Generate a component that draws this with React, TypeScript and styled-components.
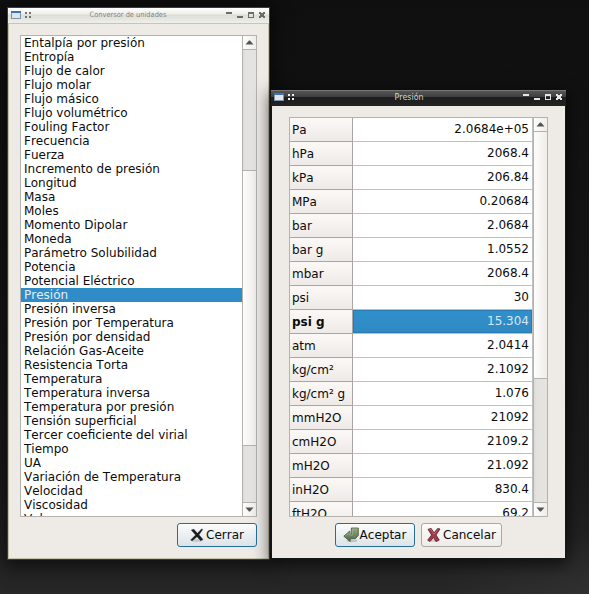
import React from 'react';
import styled, { createGlobalStyle, css } from 'styled-components';

const GlobalStyle = createGlobalStyle`
  * { box-sizing: border-box; }
  body { margin: 0; background: #141414; overflow: hidden; }
`;

const Desktop = styled.main`
  position: relative;
  width: 589px;
  height: 594px;
  overflow: hidden;
  background:
    radial-gradient(ellipse 150px 60px at 100% 100%, #303030 0%, rgba(45, 45, 45, 0) 100%),
    linear-gradient(180deg, #0f0f0f 0%, #151515 45%, #1b1b1b 80%, #272727 100%);
  color: #0c0c0c;
  font: 12px/14px 'DejaVu Sans', sans-serif;
  font-kerning: none;
  white-space: nowrap;
`;

const UnitsWindow = styled.section`
  position: absolute;
  left: 7px;
  top: 7px;
  width: 263px;
  height: 553px;
  display: flex;
  flex-direction: column;
  border: 1px solid #3d3c36;
  background: #eeebe7;
  box-shadow: 0 4px 16px 3px rgba(0, 0, 0, 0.55);
`;

const PressureWindow = styled.section`
  position: absolute;
  left: 271px;
  top: 90px;
  width: 295px;
  height: 469px;
  display: flex;
  flex-direction: column;
  border: 1px solid #15181a;
  border-top: 0;
  background: #eeebe7;
  box-shadow: -1px 0 0 #111, 0 4px 15px 2px rgba(0, 0, 0, 0.6);
`;

const TitleBar = styled.header<{ $active?: boolean }>`
  flex: none;
  display: flex;
  align-items: center;
  ${({ $active }) =>
    $active
      ? css`
          height: 16px;
          margin: 0 -1px;
          padding: 0 3px 3px;
          border-top: 1px solid #777;
          color: #d4d4d4;
          background: linear-gradient(#555 0, #3e3e3e 6px, #1d1d1d 6px, #222 100%);
          font-size: 8.8px;
        `
      : css`
          height: 16px;
          padding: 0 3px 1px;
          border-bottom: 1px solid #c6c7b2;
          color: #858585;
          background: linear-gradient(#fff 0, #eeeeea 6px, #dcddd5 7px, #efefeb 100%);
          font-size: 7.4px;
        `}
  line-height: 12px;
`;

const Title = styled.h1<{ $shift: number }>`
  flex: 1;
  margin: 0;
  padding-right: ${({ $shift }) => $shift}px;
  text-align: center;
  font: inherit;
  font-family: 'DejaVu Sans Condensed', 'DejaVu Sans', sans-serif;
  font-stretch: semi-condensed;
`;

const TitleIcon = styled.svg`
  display: block;
  flex: none;
`;

const UnitsBody = styled.div`
  flex: 1;
  display: flex;
  flex-direction: column;
  align-items: flex-end;
  gap: 6px;
  padding: 11px 11px 0;
  border: 1px solid #c3c1ab;
  border-top: 0;
`;

const PressureBody = styled.div`
  flex: 1;
  display: flex;
  flex-direction: column;
  gap: 6px;
  padding: 11px 17px 0;
`;

const Frame = styled.div<{ $height: number }>`
  width: 100%;
  height: ${({ $height }) => $height}px;
  display: flex;
  border: 1px solid #b4b2af;
  background: #fff;
`;

const List = styled.ul`
  flex: 1;
  margin: 0;
  padding: 0;
  overflow: hidden;
  list-style: none;
`;

const ListItem = styled.li<{ $selected: boolean }>`
  height: 14px;
  padding-left: 3px;
  background: ${({ $selected }) => ($selected ? '#308cc6' : 'transparent')};
  color: ${({ $selected }) => ($selected ? '#e3eef5' : 'inherit')};
`;

const Table = styled.div`
  flex: 1;
  overflow: hidden;
`;

const TableRow = styled.div`
  display: grid;
  grid-template-columns: 63px 1fr;
  height: 24px;
  line-height: 23px;
`;

const UnitCell = styled.div<{ $selected: boolean }>`
  height: 24px;
  padding-left: 2px;
  border-right: 1px solid #aaa5a2;
  border-bottom: 1px solid #aaa5a2;
  background: linear-gradient(#fbf8f6, #edeae7);
  font-weight: ${({ $selected }) => ($selected ? 700 : 400)};
  line-height: 25px;
`;

const ValueCell = styled.div<{ $selected: boolean }>`
  padding-right: 3px;
  border-right: 1px solid #c0c0c0;
  border-bottom: 1px solid #c0c0c0;
  text-align: right;
  ${({ $selected }) =>
    $selected &&
    css`
      background: linear-gradient(#3090cc, #2f89c2);
      box-shadow: inset 0 0 0 1px #287bb0;
      color: #d5e7f1;
    `}
`;

const Scrollbar = styled.div`
  flex: none;
  width: 14px;
  display: flex;
  flex-direction: column;
  border-left: 1px solid #b4b2af;
  background: linear-gradient(90deg, #dcdbd8, #e4e3e0 3px);
`;

const ScrollButton = styled.div<{ $down?: boolean }>`
  flex: none;
  height: 14px;
  display: grid;
  place-items: center;
  border: 0 solid #b4b2af;
  border-width: ${({ $down }) => ($down ? '1px 0 0' : '0 0 1px')};
  background: linear-gradient(90deg, #fdfdfc, #efedea);
`;

const ScrollGap = styled.div<{ $height: number }>`
  flex: none;
  height: ${({ $height }) => $height}px;
`;

const ScrollThumb = styled.div<{ $first?: boolean }>`
  flex: 1;
  border: 0 solid #b4b2af;
  border-width: ${({ $first }) => ($first ? '0 0 1px' : '1px 0')};
  background: linear-gradient(90deg, #fdfdfc, #efedea);
`;

const ButtonRow = styled.div`
  display: flex;
  gap: 6px;
  padding-left: 46px;
`;

const Button = styled.button<{ $primary?: boolean; $width: number }>`
  width: ${({ $width }) => $width}px;
  height: 24px;
  display: flex;
  align-items: center;
  justify-content: center;
  padding: 0;
  border: 1px solid ${({ $primary }) => ($primary ? '#256f9e' : '#aaa6a3')};
  border-radius: 3px;
  background: ${({ $primary }) =>
    $primary ? 'linear-gradient(#fbfcfc, #dce3e7)' : 'linear-gradient(#fcfbfa, #eeebe8)'};
  color: inherit;
  font: inherit;
  font-kerning: none;
`;

const ButtonIcon = styled.svg`
  flex: none;
  width: 16px;
  height: 16px;
  margin: 0 1px 0 -1px;
`;

const units = [
  'Entalpía por presión', 'Entropía', 'Flujo de calor', 'Flujo molar', 'Flujo másico',
  'Flujo volumétrico', 'Fouling Factor', 'Frecuencia', 'Fuerza', 'Incremento de presión',
  'Longitud', 'Masa', 'Moles', 'Momento Dipolar', 'Moneda', 'Parámetro Solubilidad',
  'Potencia', 'Potencial Eléctrico', 'Presión', 'Presión inversa', 'Presión por Temperatura',
  'Presión por densidad', 'Relación Gas-Aceite', 'Resistencia Torta', 'Temperatura',
  'Temperatura inversa', 'Temperatura por presión', 'Tensión superficial',
  'Tercer coeficiente del virial', 'Tiempo', 'UA', 'Variación de Temperatura', 'Velocidad',
  'Viscosidad', 'Volumen',
];

const pressures: [string, string][] = [
  ['Pa', '2.0684e+05'], ['hPa', '2068.4'], ['kPa', '206.84'], ['MPa', '0.20684'],
  ['bar', '2.0684'], ['bar g', '1.0552'], ['mbar', '2068.4'], ['psi', '30'],
  ['psi g', '15.304'], ['atm', '2.0414'], ['kg/cm²', '2.1092'], ['kg/cm² g', '1.076'],
  ['mmH2O', '21092'], ['cmH2O', '2109.2'], ['mH2O', '21.092'], ['inH2O', '830.4'],
  ['ftH2O', '69.2'],
];

function WindowMenu({ color }: { color: string }) {
  return (
    <TitleIcon width="22" height="10" viewBox="0 0 22 10" shapeRendering="crispEdges">
      <rect x="0" y="1" width="10" height="8" fill="#7c93b2" />
      <rect x="0" y="1" width="10" height="2" fill="#3974be" />
      <rect x="1" y="3" width="8" height="5" fill="#e2e3e5" />
      <path d="M14 2h2v2h-2zM18 2h2v2h-2zM14 6h2v2h-2zM18 6h2v2h-2z" fill={color} />
    </TitleIcon>
  );
}

function WindowControls({ color }: { color: string }) {
  return (
    <TitleIcon width="40" height="10" viewBox="0 0 40 10" shapeRendering="crispEdges">
      <path d="M0 2h6v2H0zM11 6h6v2h-6z" fill={color} />
      <path d="M22 2h6v6h-6zM23 4v3h4V4z" fillRule="evenodd" fill={color} />
      <path d="M33 2h2v1h2V2h2v2h-1v2h1v2h-2V7h-2v1h-2V6h1V4h-1z" fill={color} />
    </TitleIcon>
  );
}

function Arrow({ down }: { down?: boolean }) {
  return (
    <svg width="9" height="5" viewBox="0 0 9 5">
      <path d={down ? 'M.5 .5h8L5 4.5H4z' : 'M.5 4.5h8L5 .5H4z'} fill="#565452" />
    </svg>
  );
}

function CrossIcon({ red }: { red?: boolean }) {
  return (
    <ButtonIcon viewBox="0 0 16 16">
      <ellipse cx="8" cy="13.5" rx="6" ry="1.5" fill="#000" opacity=".13" />
      <path
        d={
          red
            ? 'M2 2.3 5.2 1.5 8 5.8 11.7 1.5 14 2 10 8 13.2 13 10 14.6 7.5 10.4 4 14.5 1.7 13.2 5.6 8z'
            : 'M2.2 3 4.8 2.2 8.4 6.2 12.6 2 13.8 2.4 10 7.8 14 12.4 11.7 13.8 8 9.8 3.3 13.8 1.6 13 6.6 8z'
        }
        fill={red ? '#a43745' : '#171918'}
        stroke={red ? '#632936' : '#333'}
        strokeWidth={red ? 0.9 : 0.4}
      />
      {red && <path d="m3.2 2.8 1.7-.3 3 4.8 4.3-4.8" fill="none" stroke="#c56771" strokeWidth=".8" />}
    </ButtonIcon>
  );
}

function ReturnIcon() {
  return (
    <ButtonIcon viewBox="0 0 16 16">
      <defs>
        <linearGradient id="green" x2="0" y2="1">
          <stop stopColor="#91a783" />
          <stop offset="1" stopColor="#526a48" />
        </linearGradient>
      </defs>
      <ellipse cx="9" cy="13.5" rx="5.5" ry="1.6" opacity=".16" />
      <path
        d="M8.3 1H15.3v7.4L12.6 11.5H7.2v3L.8 9.2l6-5.2v2.9h1.5z"
        fill="url(#green)"
        stroke="#41533a"
        strokeWidth=".8"
      />
      <path d="M2.2 9.1 6.3 5.8V8h3V2h5" fill="none" stroke="#a9b99e" strokeWidth=".6" />
    </ButtonIcon>
  );
}

export default function App() {
  return (
    <>
      <GlobalStyle />
      <Desktop>
        <UnitsWindow>
          <TitleBar>
            <WindowMenu color="#727272" />
            <Title $shift={3}>Conversor de unidades</Title>
            <WindowControls color="#6b6b6b" />
          </TitleBar>
          <UnitsBody>
            <Frame $height={482}>
              <List>
                {units.map((unit) => (
                  <ListItem key={unit} $selected={unit === 'Presión'}>{unit}</ListItem>
                ))}
              </List>
              <Scrollbar>
                <ScrollButton><Arrow /></ScrollButton>
                <ScrollGap $height={120} />
                <ScrollThumb />
                <ScrollGap $height={56} />
                <ScrollButton $down><Arrow down /></ScrollButton>
              </Scrollbar>
            </Frame>
            <Button $primary $width={80}><CrossIcon />Cerrar</Button>
          </UnitsBody>
        </UnitsWindow>
        <PressureWindow>
          <TitleBar $active>
            <WindowMenu color="#eee" />
            <Title $shift={1}>Presión</Title>
            <WindowControls color="#e4e4e4" />
          </TitleBar>
          <PressureBody>
            <Frame $height={400}>
              <Table>
                {pressures.map(([unit, value]) => (
                  <TableRow key={unit}>
                    <UnitCell $selected={unit === 'psi g'}>{unit}</UnitCell>
                    <ValueCell $selected={unit === 'psi g'}>{value}</ValueCell>
                  </TableRow>
                ))}
              </Table>
              <Scrollbar>
                <ScrollButton><Arrow /></ScrollButton>
                <ScrollThumb $first />
                <ScrollGap $height={123} />
                <ScrollButton $down><Arrow down /></ScrollButton>
              </Scrollbar>
            </Frame>
            <ButtonRow>
              <Button $primary $width={80}><ReturnIcon />Aceptar</Button>
              <Button $width={81}><CrossIcon red />Cancelar</Button>
            </ButtonRow>
          </PressureBody>
        </PressureWindow>
      </Desktop>
    </>
  );
}
